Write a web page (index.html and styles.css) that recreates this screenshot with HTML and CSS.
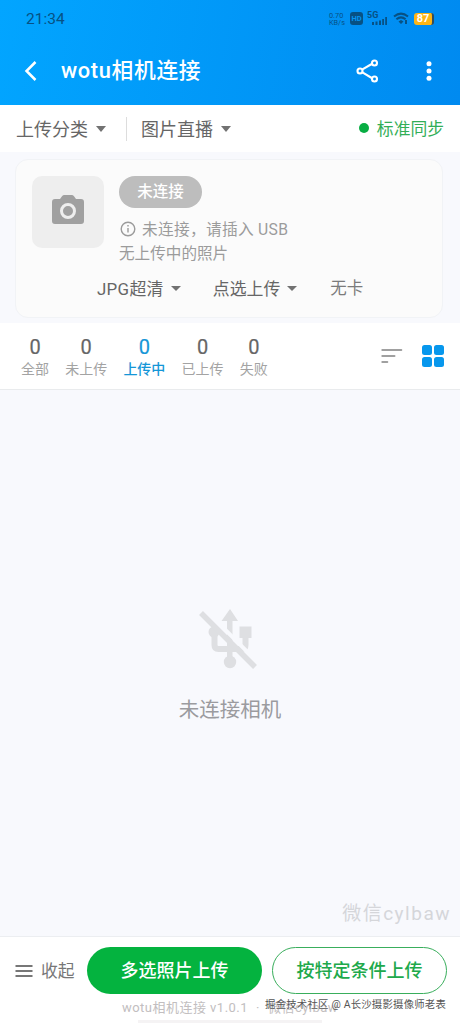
FILE: index.html
```html
<!DOCTYPE html>
<html lang="zh-CN">
<head>
<meta charset="utf-8">
<title>wotu相机连接</title>
<link rel="stylesheet" href="styles.css">
</head>
<body>
<div class="app">
  <header class="header">
    <div class="status">
      <span class="clock">21:34</span>
      <div class="system">
        <div class="speed"><span>0.70</span><span>KB/s</span></div>
        <span class="hd">HD</span>
        <svg class="signal" width="21" height="14" viewBox="0 0 21 14"><text x="0" y="6.2" class="five-g">5G</text><path d="M5 10h2v3H5zM8.5 9.5h2V13h-2zM12 8.5h2V13h-2zM15.2 7h1.8v6h-1.8zM18.2 5h1.8v8h-1.8z"/></svg>
        <svg class="wifi" width="16" height="13" viewBox="0 0 16 13"><path d="M1 4.5Q8-1.2 15 4.5M3.4 7.3Q8 3.5 12.6 7.3" fill="none" stroke="currentColor" stroke-width="2"/><path d="M8 8l2.5 1.5L8 12 5.5 9.500zM12 8h2v4h-2z"/></svg>
        <span class="battery">87</span>
      </div>
    </div>
    <div class="titlebar">
      <svg class="back" width="14" height="22" viewBox="0 0 14 22"><path d="M11.5 2L2.5 11l9 9"/></svg>
      <h1>wotu相机连接</h1>
      <svg class="share" width="24" height="26" viewBox="0 0 24 26"><path d="M6 11.7l10.600-6.200M6 14.200l10.600 6.300"/><circle cx="4" cy="13" r="2.5"/><circle cx="18.5" cy="5" r="2.5"/><circle cx="18.5" cy="21" r="2.5"/></svg>
      <svg class="more" width="6" height="22" viewBox="0 0 6 22"><circle cx="3" cy="3.8" r="2.5"/><circle cx="3" cy="11" r="2.5"/><circle cx="3" cy="18.2" r="2.5"/></svg>
    </div>
  </header>

  <nav class="filters">
    <span class="category">上传分类</span><i class="caret"></i>
    <i class="divider"></i>
    <span>图片直播</span><i class="caret"></i>
    <span class="sync"><i class="dot"></i>标准同步</span>
  </nav>

  <section class="device">
    <div class="card">
      <div class="summary">
        <div class="thumb"><svg width="32" height="30" viewBox="0 0 32 30"><path fill-rule="evenodd" d="M3 4h5l2-2.8Q11 0 12.2 0h7.6Q21 0 22 1.2L24 4h5q3 0 3 3v19q0 3-3 3H3q-3 0-3-3V7q0-3 3-3zM16 8a8 8 0 1 0 0 16 8 8 0 0 0 0-16zm0 3a5 5 0 1 1 0 10 5 5 0 0 1 0-10z"/></svg></div>
        <div class="details">
          <span class="badge">未连接</span>
          <div class="hint"><svg width="16" height="16" viewBox="0 0 16 16"><circle cx="8" cy="8" r="6.8"/><path d="M8 7v4.5M8 4v1.6"/></svg><span>未连接</span><span class="comma">，</span><span>请插入 USB</span></div>
          <div class="photos">无上传中的照片</div>
        </div>
      </div>
      <div class="options">
        <span>JPG超清</span><i class="caret small"></i>
        <span class="mode">点选上传</span><i class="caret small"></i>
        <span class="storage">无卡</span>
      </div>
    </div>
  </section>

  <section class="stats">
    <div class="stat all"><b>0</b><span>全部</span></div>
    <div class="stat"><b>0</b><span>未上传</span></div>
    <div class="stat active"><b>0</b><span>上传中</span></div>
    <div class="stat"><b>0</b><span>已上传</span></div>
    <div class="stat failed"><b>0</b><span>失败</span></div>
    <svg class="sort" width="22" height="16" viewBox="0 0 22 16"><path d="M1.3 2h19M1.3 8h12.2M1.3 14h5"/></svg>
    <div class="grid"><i></i><i></i><i></i><i></i></div>
  </section>

  <main class="empty">
    <svg class="usb" width="58" height="60" viewBox="0 0 58 60"><path d="M31 0l8 12h-5.500v40h-5.500V12h-5.500z"/><circle cx="31" cy="53" r="6.200"/><path d="M15.500 23v13q0 4 4 4H31M46.500 28v8q0 4-4 4H31" fill="none" stroke="currentColor" stroke-width="6"/><circle cx="15" cy="23" r="5.500"/><path d="M40.500 17.500h12v11.500h-12z"/><path d="M6.500 1l53 53" stroke="#f8f9fd" stroke-width="4"/><path d="M2 4l54 54" stroke="currentColor" stroke-width="5.500"/></svg>
    <p>未连接相机</p>
    <span class="wechat">微信cylbaw</span>
  </main>

  <footer class="footer">
    <div class="actions">
      <svg class="menu" width="18" height="14" viewBox="0 0 18 14"><path d="M.5 2h17M.5 7h17M.5 12h17"/></svg>
      <span class="collapse">收起</span>
      <button class="primary">多选照片上传</button>
      <button class="outline">按特定条件上传</button>
    </div>
    <div class="version">wotu相机连接 v1.0.1<span class="middot">·</span>微信cylbaw</div>
    <div class="home"></div>
    <div class="credit">掘金技术社区 @ A长沙摄影摄像师老表</div>
  </footer>
</div>
</body>
</html>
```
FILE: styles.css
```css
* { box-sizing: border-box; }
body { margin: 0; font-family: Roboto, "Noto Sans CJK SC", sans-serif; color: #666; }
.app { width: 460px; height: 1024px; display: flex; flex-direction: column; overflow: hidden; background: #fff; }
i { flex: none; font-style: normal; }
svg { flex: none; }

.header { flex: none; height: 105px; background: linear-gradient(100deg, #02a5ff, #008af0); color: #fff; }
.status { height: 37px; padding: 0 26px; display: flex; align-items: center; justify-content: space-between; color: #075184; }
.clock { font-size: 15.5px; }
.system { display: flex; align-items: center; height: 14px; }
.speed { display: flex; flex-direction: column; width: 16px; font-size: 7.3px; line-height: 7px; margin-right: 5px; }
.hd { width: 13px; height: 13px; border-radius: 3px; background: #075184; color: #0496f4; font: bold 7.5px/13px Roboto, sans-serif; text-align: center; margin-right: 4px; }
.signal { fill: currentColor; margin-right: 5px; overflow: visible; }
.five-g { font: bold 9px Roboto, sans-serif; }
.wifi { fill: currentColor; margin-right: 5px; }
.battery { width: 20px; height: 12px; border-radius: 3px; border-right: 2px solid #314d5d; background: #fdb515; color: #fff; font: bold 11px/12px Roboto, sans-serif; text-align: center; }
.titlebar { display: flex; align-items: center; height: 67px; padding: 0 28px 0 24px; }
.back { fill: none; stroke: #fff; stroke-width: 2.5; }
h1 { margin: 0 auto 0 23px; padding-top: 1px; font-size: 21.8px; line-height: 30px; font-weight: 500; letter-spacing: .65px; }
.share { fill: none; stroke: #fff; stroke-width: 2.1; margin-right: 46px; }
.more { fill: #fff; }

.filters { flex: none; height: 47px; padding: 0 16px; display: flex; align-items: center; font-size: 18px; }
.filters span { transform: translateY(-1px); }
.caret { border: 5.5px solid transparent; border-top: 6px solid #727272; border-bottom: 0; margin-left: 8px; }
.divider { width: 1px; height: 24px; background: #ddd; margin: 0 14px 0 20px; }
.sync { margin-left: auto; display: flex; align-items: center; gap: 8px; color: #32ae57; font-size: 16.8px; }
.dot { width: 10px; height: 10px; border-radius: 50%; background: #08ad43; }

.device { flex: none; height: 171px; padding: 7px 17px 5px 15px; background: #f8f9fd; }
.card { height: 159px; border: 1px solid #f1f3f6; border-radius: 13px; background: #fbfbfb; padding: 16px; }
.summary { display: flex; gap: 15px; }
.thumb { width: 72px; height: 72px; border-radius: 10px; background: #eee; display: flex; justify-content: center; padding-top: 19px; }
.thumb svg { fill: #a0a0a0; }
.details { display: flex; flex-direction: column; align-items: flex-start; }
.badge { width: 83px; height: 32px; border-radius: 16px; background: #bdbdbd; color: #fff; font-size: 15.5px; line-height: 32px; font-weight: 500; text-align: center; }
.hint { display: flex; align-items: center; height: 25px; margin-top: 8px; font-size: 15.7px; letter-spacing: .3px; color: #9b9b9b; white-space: pre; }
.hint svg { fill: none; stroke: #9b9b9b; stroke-width: 1.4; margin: 0 6px 0 1px; }
.photos { font-size: 15.6px; line-height: 26px; color: #9b9b9b; }
.options { display: flex; align-items: center; height: 24px; margin: 9px 0 0 65px; font-size: 16.9px; }
.options span { transform: translateY(-1px); }
.options span:first-child { letter-spacing: .3px; }
.options .mode { margin-left: 32px; }
.options .storage { margin-left: 33px; color: #7b7b7b; font-size: 16.5px; }
.caret.small { border-width: 5px 5px 0; margin-left: 7px; }

.stats { flex: none; height: 67px; padding: 0 16px 0 21px; display: flex; align-items: center; border-bottom: 1px solid #e9ebed; }
.stat { display: flex; flex-direction: column; align-items: center; width: 42px; margin: 3px 16.2px 0 0; font-size: 14px; color: #a3a3a3; white-space: nowrap; }
.stat b { font-size: 20px; line-height: 22px; font-weight: 400; color: #666; -webkit-text-stroke: .2px; }
.stat span { line-height: 21px; margin-top: 1px; }
.stat.all, .stat.failed { width: 28px; }
.stat.failed { margin-right: auto; }
.stat.active, .stat.active b { color: #1596d7; }
.stat.active span { font-weight: 500; }
.sort { fill: none; stroke: #a0a0a0; stroke-width: 2; stroke-linecap: round; margin-right: 19px; }
.grid { display: grid; grid-template-columns: 10px 10px; grid-auto-rows: 10px; gap: 2px; }
.grid i { background: #0797ed; border-radius: 2.5px; }

.empty { position: relative; flex: 1; min-height: 0; padding-top: 219px; display: flex; flex-direction: column; align-items: center; background: #f8f9fd; }
.usb { color: #dedfe2; fill: currentColor; margin-right: 5px; }
.empty p { margin: 26px 0 0; font-size: 20.5px; line-height: 30px; color: #9b9b9f; }
.wechat { position: absolute; right: 9px; bottom: 8px; font-size: 19px; line-height: 28px; letter-spacing: 1.5px; color: #d5d6da; }

.footer { position: relative; flex: none; height: 88px; border-top: 1px solid #eceef1; padding-top: 10px; display: flex; flex-direction: column; align-items: center; background: #fff; }
.actions { width: 460px; height: 47px; padding: 0 13px 0 15px; display: flex; align-items: center; }
.menu { stroke: #777; stroke-width: 1.8; }
.collapse { margin-left: 8px; margin-right: auto; font-size: 16.8px; line-height: 24px; color: #777; }
button { padding: 0; height: 47px; border-radius: 24px; border: 0; font: 500 18px/46px Roboto, "Noto Sans CJK SC", sans-serif; text-align: center; }
.primary { width: 175px; color: #fff; background: #04b33f; }
.outline { width: 175px; margin-left: 10px; color: #20a94b; background: #fff; border: 1.5px solid #39ae5c; }
.version { margin-top: 5px; font-size: 13px; line-height: 18px; letter-spacing: .48px; color: #c2bec0; }
.middot { margin: 0 8px; }
.home { width: 184px; height: 3px; margin-top: 3px; background: #f5f3f4; }
.credit { position: absolute; right: 14px; bottom: 12px; font-size: 10.4px; line-height: 15px; letter-spacing: .2px; color: #555; white-space: nowrap; text-shadow: 0 0 1px #fff; }
```
